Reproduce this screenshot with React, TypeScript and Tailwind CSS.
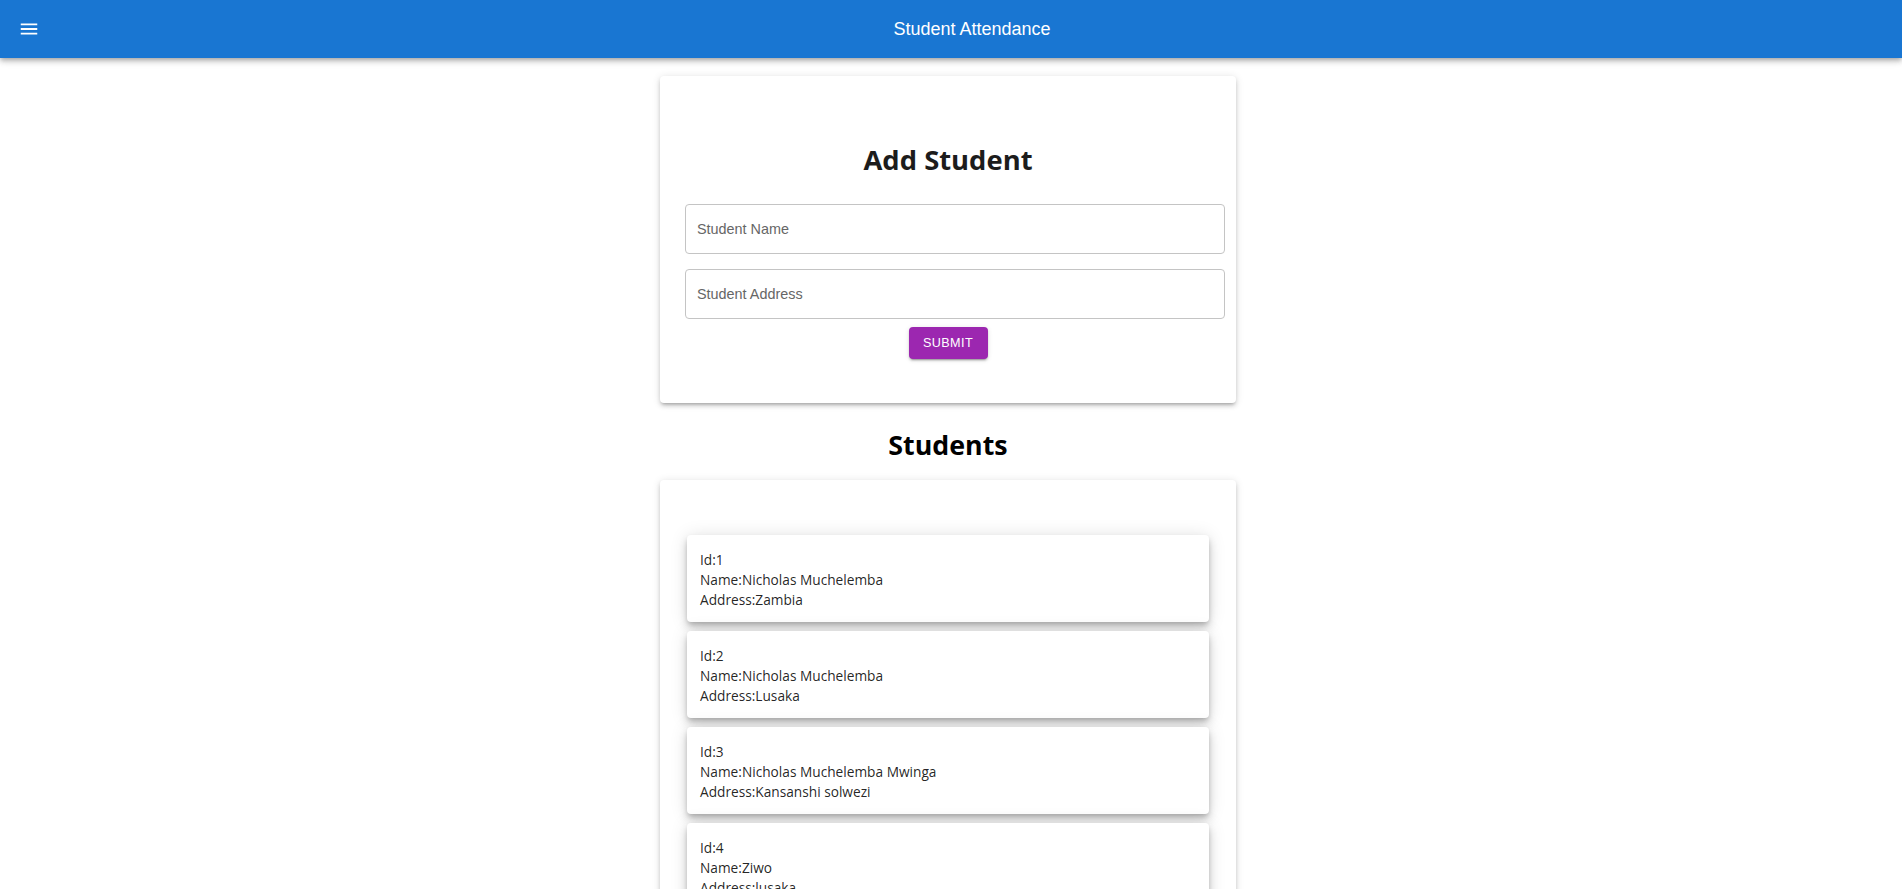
const students = [
  { id: 1, name: "Nicholas Muchelemba", address: "Zambia" },
  { id: 2, name: "Nicholas Muchelemba", address: "Lusaka" },
  { id: 3, name: "Nicholas Muchelemba Mwinga", address: "Kansanshi solwezi" },
  { id: 4, name: "Ziwo", address: "lusaka" },
];

function MenuIcon() {
  return (
    <svg width="22" height="22" viewBox="0 0 24 24" fill="white">
      <path d="M3 18h18v-2H3v2zm0-5h18v-2H3v2zm0-7v2h18V6H3z" />
    </svg>
  );
}

function StudentCard({ id, name, address }: { id: number; name: string; address: string }) {
  return (
    <div className="rounded-[4px] bg-white pl-[13px] pt-[15px] pb-[12px] text-[13.7px] leading-[20px] text-[rgba(0,0,0,0.87)] shadow-[0_3px_5px_-1px_rgba(0,0,0,0.2),0_6px_10px_0_rgba(0,0,0,0.14),0_1px_18px_0_rgba(0,0,0,0.12)]">
      <div>Id:{id}</div>
      <div>Name:{name}</div>
      <div>Address:{address}</div>
    </div>
  );
}

export default function App() {
  return (
    <div
      className="h-screen overflow-y-scroll bg-white [&::-webkit-scrollbar]:w-[3px] [&::-webkit-scrollbar-track]:bg-[#f1f1f1] [&::-webkit-scrollbar-thumb]:bg-[#bdbdbd]"
      style={{ fontFamily: '"Open Sans", sans-serif' }}
    >
      <header className="relative z-10 flex h-[58px] items-center bg-[#1976d2] pl-[7px] pr-[22px] text-white shadow-[0_2px_4px_-1px_rgba(0,0,0,0.2),0_4px_5px_0_rgba(0,0,0,0.14),0_1px_10px_0_rgba(0,0,0,0.12)]">
        <button className="mr-[14px] flex h-[43px] w-[43px] items-center justify-center rounded-full">
          <MenuIcon />
        </button>
        <h6 className="flex-1 text-center text-[18px] font-['Liberation_Sans',Arial,sans-serif]">
          Student Attendance
        </h6>
      </header>

      <main className="ml-[calc(50%-291px)] flex w-[576px] flex-col pt-[18px] pb-[18px]">
        <section className="rounded-[4px] bg-white pt-[65px] pb-[44px] shadow-[0_3px_3px_-2px_rgba(0,0,0,0.2),0_3px_4px_0_rgba(0,0,0,0.14),0_1px_8px_0_rgba(0,0,0,0.12)]">
          <h1 className="text-center text-[27.4px] font-bold leading-[38px] text-[#1c1c1c]">Add Student</h1>
          <form className="mt-[25px] flex flex-col items-start">
            <input
              placeholder="Student Name"
              className="ml-[25px] h-[50px] w-[540px] rounded-[4px] border border-[#c4c4c4] px-[11px] text-[14.4px] font-['Liberation_Sans',Arial,sans-serif] outline-none placeholder:text-[#666]"
            />
            <input
              placeholder="Student Address"
              className="mt-[15px] ml-[25px] h-[50px] w-[540px] rounded-[4px] border border-[#c4c4c4] px-[11px] text-[14.4px] font-['Liberation_Sans',Arial,sans-serif] outline-none placeholder:text-[#666]"
            />
            <button
              type="button"
              className="mt-[8px] h-[32px] w-[79px] self-center rounded-[4px] bg-[#9c27b0] text-[12.6px] font-medium uppercase tracking-[0.4px] text-white font-['Liberation_Sans',Arial,sans-serif] shadow-[0_3px_1px_-2px_rgba(0,0,0,0.2),0_2px_2px_0_rgba(0,0,0,0.14),0_1px_5px_0_rgba(0,0,0,0.12)]"
            >
              Submit
            </button>
          </form>
        </section>

        <h1 className="mt-[23px] text-center text-[26.8px] font-bold leading-[38px] text-black">Students</h1>

        <section className="mt-[16px] min-h-[1247px] rounded-[4px] bg-white px-[27px] pt-[55px] pb-[27px] shadow-[0_3px_3px_-2px_rgba(0,0,0,0.2),0_3px_4px_0_rgba(0,0,0,0.14),0_1px_8px_0_rgba(0,0,0,0.12)]">
          <div className="flex flex-col gap-[9px]">
            {students.map((s) => (
              <StudentCard key={s.id} {...s} />
            ))}
          </div>
        </section>
      </main>
    </div>
  );
}
